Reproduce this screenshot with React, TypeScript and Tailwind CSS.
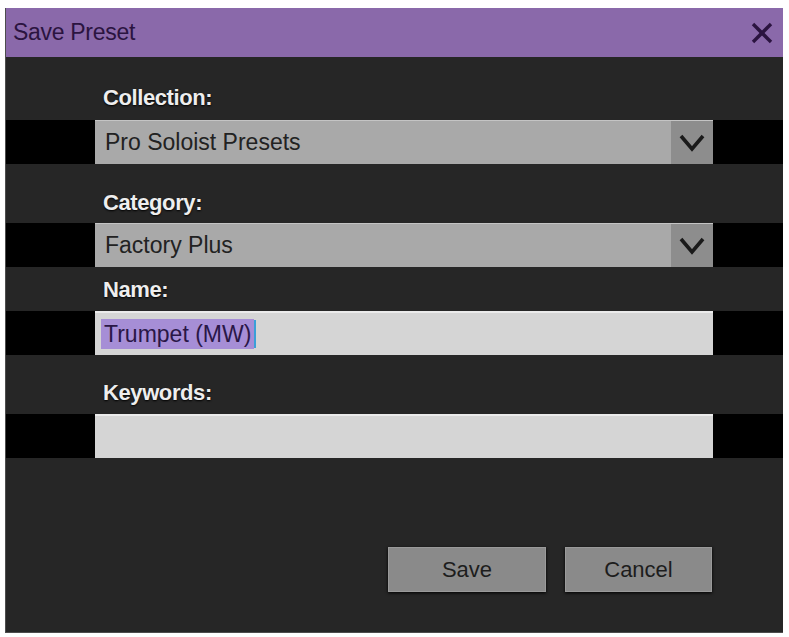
import React from "react";

const FONT = { fontFamily: '"Liberation Sans", Arial, sans-serif' };

function Chevron() {
  return (
    <svg width="26" height="18" viewBox="0 0 26 18" fill="none">
      <polyline points="2,2 13,15 24,2" stroke="#1a1a1a" strokeWidth="3.6" strokeLinejoin="miter" />
    </svg>
  );
}

function Label({ text, mt }: { text: string; mt: string }) {
  return (
    <div
      className={`${mt} h-[28px] pl-[97px] text-[22px] font-bold tracking-[-0.4px] leading-[28px] text-[#eeeeee] [text-shadow:0_1px_2px_#000]`}
    >
      {text}
    </div>
  );
}

function Strip({ mt, children }: { mt: string; children: React.ReactNode }) {
  return (
    <div className={`${mt} h-[44px] bg-black`}>
      <div className="ml-[89px] w-[618px] h-full">{children}</div>
    </div>
  );
}

function Select({ value }: { value: string }) {
  return (
    <div className="flex h-full bg-[#a9a9a9] border-t border-[#c4c4c4]">
      <div className="flex-1 pl-[10px] flex items-center text-[23px] text-[#222]">{value}</div>
      <div className="w-[42px] bg-[#8d8d8d] flex items-center justify-center">
        <Chevron />
      </div>
    </div>
  );
}

export default function App() {
  return (
    <div className="w-[789px] h-[637px] bg-white pt-[8px] pl-[5px]" style={FONT}>
      <div className="w-[778px] h-[625px] flex flex-col bg-[#262626] border-l border-b border-[#4d4d4d]">
        <div className="h-[49px] shrink-0 bg-[#8a69aa] flex items-center justify-between pl-[7px] pr-[10px]">
          <span className="text-[23px] tracking-[-0.3px] text-[#2b1440]">Save Preset</span>
          <svg width="22" height="22" viewBox="0 0 22 22">
            <line x1="2" y1="2" x2="20" y2="20" stroke="#2b1440" strokeWidth="3.4" />
            <line x1="20" y1="2" x2="2" y2="20" stroke="#2b1440" strokeWidth="3.4" />
          </svg>
        </div>

        <Label text="Collection:" mt="mt-[27px]" />
        <Strip mt="mt-[8px]">
          <Select value="Pro Soloist Presets" />
        </Strip>

        <Label text="Category:" mt="mt-[25px]" />
        <Strip mt="mt-[6px]">
          <Select value="Factory Plus" />
        </Strip>

        <Label text="Name:" mt="mt-[9px]" />
        <Strip mt="mt-[7px]">
          <div className="h-full bg-[#d5d5d5] border-t-2 border-[#ebebeb] flex items-center pl-[6px]">
            <span className="bg-[#a68ed6] text-[#2a1747] text-[23px] leading-[30px] px-[3px]">Trumpet (MW)</span>
            <span className="w-[2px] h-[28px] bg-[#3aa0d8]" />
          </div>
        </Strip>

        <Label text="Keywords:" mt="mt-[24px]" />
        <Strip mt="mt-[7px]">
          <div className="h-full bg-[#d5d5d5] border-t-2 border-[#ebebeb]" />
        </Strip>

        <div className="mt-[89px] flex justify-end gap-[19px] pr-[71px]">
          <button className="w-[158px] h-[45px] bg-[#8a8a8a] border border-[#9a9a9a] text-[22px] text-[#1d1d1d] shadow-[0_1px_3px_#000]">
            Save
          </button>
          <button className="w-[147px] h-[45px] bg-[#8a8a8a] border border-[#9a9a9a] text-[22px] text-[#1d1d1d] shadow-[0_1px_3px_#000]">
            Cancel
          </button>
        </div>
      </div>
    </div>
  );
}
